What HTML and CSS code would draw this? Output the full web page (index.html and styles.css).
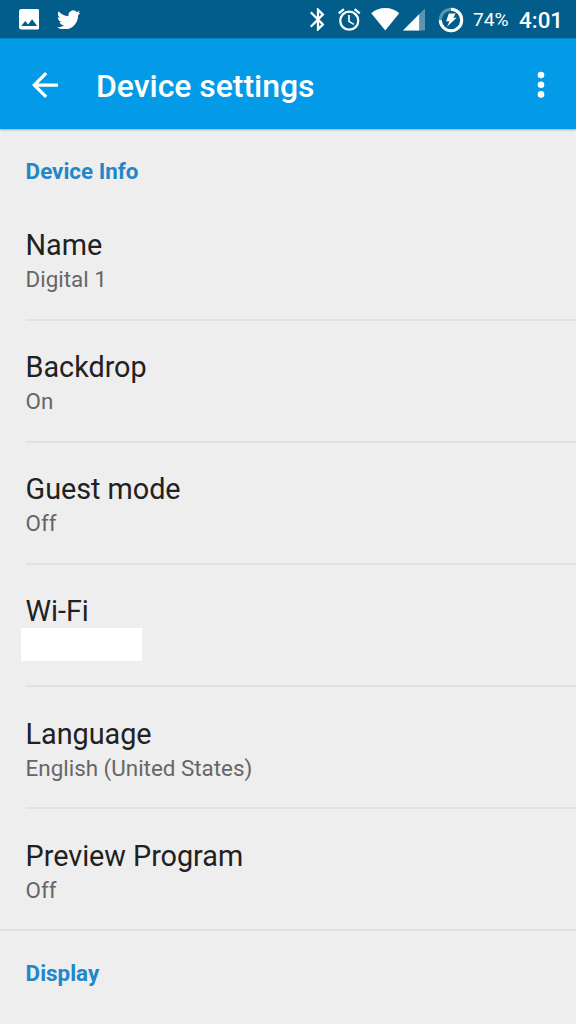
FILE: index.html
```html
<!DOCTYPE html>
<html lang="en">
<head>
<meta charset="utf-8">
<title>Device settings</title>
<link rel="stylesheet" href="styles.css">
</head>
<body>
<div class="status">
  <svg class="i-image" viewBox="3 3 18 18"><path d="M21 19V5c0-1.100-.9-2-2-2H5c-1.100 0-2 .9-2 2v14c0 1.100.9 2 2 2h14c1.100 0 2-.9 2-2zM8.500 13.500l2.500 3.010L14.500 12l4.500 6H5l3.500-4.500z"/></svg>
  <svg class="i-bird" viewBox="0 2 24 20"><path d="M23.950 4.570a10 10 0 0 1-2.820.77 4.960 4.960 0 0 0 2.160-2.720 9.900 9.900 0 0 1-3.120 1.190 4.920 4.920 0 0 0-8.380 4.480C7.690 8.100 4.070 6.130 1.640 3.160a4.820 4.820 0 0 0-.67 2.480c0 1.710.87 3.210 2.190 4.100a4.900 4.900 0 0 1-2.230-.62v.06a4.920 4.920 0 0 0 3.950 4.830 5 5 0 0 1-2.210.08 4.940 4.940 0 0 0 4.600 3.420A9.870 9.870 0 0 1 0 19.540a14 14 0 0 0 7.550 2.210c9.050 0 14-7.500 14-13.980 0-.21 0-.42-.02-.63a9.940 9.940 0 0 0 2.420-2.570z"/></svg>
  <span class="spacer"></span>
  <svg class="i-bt" viewBox="5 2 12.710 20"><path d="M17.710 7.710L12 2h-1v7.590L6.410 5 5 6.410 10.590 12 5 17.590 6.410 19 11 14.410V22h1l5.710-5.710-4.300-4.290 4.300-4.290zM13 5.830l1.880 1.880L13 9.590V5.830zm1.880 10.460L13 18.170v-3.760l1.880 1.880z"/></svg>
  <svg class="i-alarm" viewBox="2 1.800 20 20.200"><path d="M22 5.720l-4.600-3.860-1.290 1.530 4.600 3.860L22 5.720zM7.880 3.390L6.600 1.860 2 5.710l1.290 1.530 4.590-3.850zM12.500 8H11v6l4.750 2.850.75-1.230-4-2.370V8zM12 4a9 9 0 1 0 0 18 9 9 0 0 0 0-18zm0 16a7 7 0 1 1 0-14 7 7 0 0 1 0 14z"/></svg>
  <svg class="i-wifi" viewBox="0 0 28 22.500"><path d="M14 22.500L28 5.200C24.500 2 19.500 0 14 0S3.500 2 0 5.200z"/></svg>
  <svg class="i-cell" viewBox="0 0 23 23"><path opacity=".35" d="M0 23H23V0z"/><path d="M0 23H16.500V6.500z"/></svg>
  <svg class="i-batt" viewBox="0 0 26 26"><circle class="ring" cx="13" cy="13" r="10.700" opacity=".35"/><path class="ring" d="M13 2.300A10.700 10.700 0 1 1 2.310 13.300"/><path d="M10.800 6.500H17.600L15.300 10.700H18.600L9 19.800L11.500 14.200H8.200z"/></svg>
  <span class="percent">74%</span>
  <span class="clock">4:01</span>
</div>
<header class="toolbar">
  <svg class="i-back" viewBox="4 4 16 16"><path d="M20 11H7.830l5.590-5.590L12 4l-8 8 8 8 1.410-1.410L7.830 13H20v-2z"/></svg>
  <h1 class="title">Device settings</h1>
  <svg class="i-more" viewBox="0 0 8 28"><circle cx="4" cy="4" r="3.300"/><circle cx="4" cy="13.700" r="3.300"/><circle cx="4" cy="23.400" r="3.300"/></svg>
</header>
<main class="list">
  <h2 class="section">Device Info</h2>
  <div class="row"><div class="name">Name</div><div class="value">Digital 1</div></div>
  <div class="row"><div class="name">Backdrop</div><div class="value">On</div></div>
  <div class="row"><div class="name">Guest mode</div><div class="value">Off</div></div>
  <div class="row"><div class="name">Wi-Fi</div><div class="redacted"></div></div>
  <div class="row lower"><div class="name">Language</div><div class="value">English (United States)</div></div>
  <div class="row lower last"><div class="name">Preview Program</div><div class="value">Off</div></div>
  <h2 class="section">Display</h2>
</main>
</body>
</html>
```
FILE: styles.css
```css
* { box-sizing: border-box; }
body {
  margin: 0;
  height: 1024px;
  overflow: hidden;
  background: #eee;
  font-family: Roboto, sans-serif;
}
svg { display: block; flex: none; fill: #fff; }
h1, h2 { margin: 0; }
.status {
  display: flex;
  align-items: center;
  height: 38px;
  padding: 0 12px 0 18.500px;
  background: #025d8a;
  color: #fff;
}
.status svg { margin-top: 1px; }
.spacer { flex: 1; }
.i-image { width: 20.500px; height: 20.500px; }
.i-bird { width: 23.500px; height: 19.800px; margin-left: 17.500px; }
.i-bt { width: 14.500px; height: 23px; }
.i-alarm { width: 22.500px; height: 23px; margin-left: 13.500px; }
.i-wifi { width: 28.500px; height: 22.500px; margin-left: 10.500px; }
.i-cell { width: 22.500px; height: 22.500px; margin-left: 3px; }
.i-batt { width: 26px; height: 26px; margin-left: 13px; }
.ring { fill: none; stroke: #fff; stroke-width: 3; }
.percent { width: 36px; margin-left: 9px; font-size: 19.200px; line-height: 38px; padding-top: 2px; white-space: nowrap; }
.clock { width: 45px; margin-left: 10px; font-size: 22.400px; font-weight: 500; line-height: 38px; padding-top: 2px; white-space: nowrap; }
.toolbar {
  display: flex;
  align-items: center;
  height: 91px;
  padding: 0 31px 0 32px;
  border-top: 1px solid #0388cb;
  background: #039be7;
  box-shadow: 0 1px 2px rgba(0, 0, 0, .3);
  color: #fff;
}
.i-back { width: 26px; height: 26px; margin-top: 2px; }
.title { flex: 1; margin-left: 38px; font-size: 32px; font-weight: 500; line-height: 38px; padding-top: 3px; letter-spacing: -.05px; }
.i-more { width: 8px; height: 28px; margin-top: 1px; }
.section {
  padding: 29px 0 0 25.600px;
  color: #2387c7;
  font-size: 22.400px;
  font-weight: 700;
  line-height: 27px;
  height: 70px;
}
.row {
  height: 122px;
  margin-left: 25.600px;
  padding-top: 29px;
  border-bottom: 2px solid #e1e1e1;
}
.row.lower { padding-top: 29.600px; }
.row.last { margin-left: 0; padding-left: 25.600px; }
.name { color: #212121; font-size: 28.800px; line-height: 34px; letter-spacing: -.04px; }
.value { color: #666; font-size: 22.400px; line-height: 27px; padding-top: 4px; }
.redacted { width: 121px; height: 33px; margin: 0 0 0 -4.600px; background: #fff; }
```
